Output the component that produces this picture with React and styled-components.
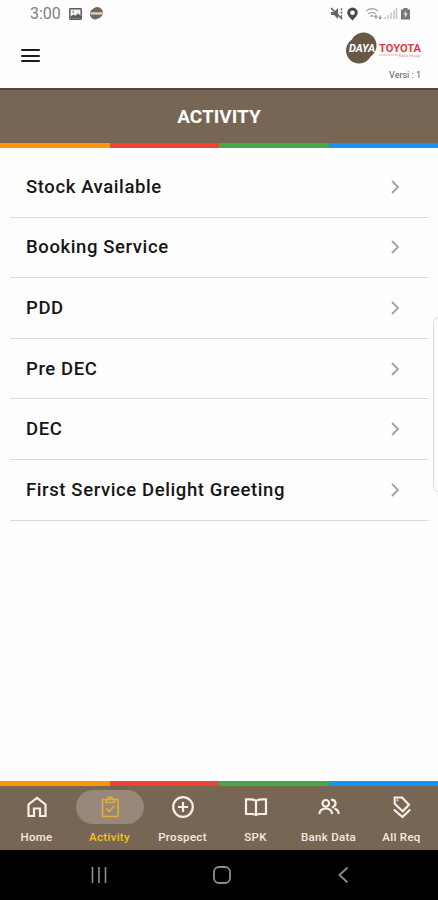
import styled, { createGlobalStyle } from 'styled-components';

export default function App() {
  return (
    <Screen>
      <GlobalStyle />
      <StatusBar />
      <Header />
      <TitleBar>ACTIVITY</TitleBar>
      <ColorStrip />
      <Menu>
        {MENU_ITEMS.map((label) => (
          <MenuItem key={label}>
            <span>{label}</span>
            <Chevron />
          </MenuItem>
        ))}
      </Menu>
      <ColorStrip />
      <TabBar>
        {TABS.map(({ label, Icon }) => (
          <Tab key={label} $active={label === 'Activity'}>
            <TabPill $active={label === 'Activity'}>
              <Icon />
            </TabPill>
            <TabLabel>{label}</TabLabel>
          </Tab>
        ))}
      </TabBar>
      <SystemNav />
      <EdgeHandle />
    </Screen>
  );
}

function StatusBar() {
  return (
    <StatusRow>
      <Clock>3:00</Clock>
      <svg width="13" height="12" viewBox="0 0 13 12">
        <rect x="0.8" y="0.8" width="11.4" height="10.4" rx="0.6" fill="#f2f2f2" stroke="#5c5c5c" strokeWidth="1.5" />
        <path d="M1.5 10.5V8.5l3-2 2 1.2L9 5.5l3 2.5v2.5z" fill="#5c5c5c" />
        <circle cx="4.2" cy="3.9" r="0.8" fill="#777" />
      </svg>
      <Notification width="15" height="15" viewBox="0 0 15 15">
        <circle cx="8.2" cy="6.8" r="5.7" fill="#75665a" />
        <circle cx="6.2" cy="8" r="5.4" fill="#75665a" />
        <path d="M1.5 7.4h12" stroke="#d8d0c8" strokeWidth="2.4" />
      </Notification>
      <StatusIcons width="82" height="16" viewBox="0 0 82 16">
        <path d="M1 6h3l4-4v11L4 9H1z" fill="#666" />
        <path d="M1 2l11 11" stroke="#666" strokeWidth="1.7" fill="none" />
        <path d="M11.5 2v11" stroke="#777" strokeWidth="1.4" strokeDasharray="2.5 1" />
        <path
          fillRule="evenodd"
          d="M22.5 1.5a5.3 5.3 0 0 0-5.3 5.3c0 3.2 5.3 7.7 5.3 7.7s5.300-4.500 5.300-7.700a5.300 5.300 0 0 0-5.300-5.300zm0 3a2.300 2.300 0 1 1 0 4.600 2.300 2.300 0 0 1 0-4.600z"
          fill="#4b4b4b"
        />
        <path d="M36 5q6-4.500 12 0M38 8q4-3 8 0M40 10.500q2-1.500 4 0" stroke="#aaa" strokeWidth="1.4" fill="none" />
        <path d="M46 13V9.5M44.7 11l1.3-1.5 1.3 1.5M50 9.500V13M48.700 11.500L50 13l1.300-1.500" stroke="#777" strokeWidth="1" fill="none" />
        <path d="M55 13v-2M58 13V9M61 13V6.5M64 13V4M66.5 13V2" stroke="#c8c8c8" strokeWidth="1.6" />
        <path d="M73.5 2h4v1.5H80v10h-9v-10h2.5z" fill="#777" />
        <path d="M76 4.5l-2.5 4H75v3l3-4h-2z" fill="#ddd" />
      </StatusIcons>
    </StatusRow>
  );
}

function Header() {
  return (
    <HeaderRow>
      <Burger>
        <i />
        <i />
        <i />
      </Burger>
      <Brand>
        <Logo width="77" height="34" viewBox="0 0 77 34">
          <circle cx="18.500" cy="14.500" r="13" fill="#685947" />
          <circle cx="14" cy="19.500" r="13" fill="#685947" />
          <text x="4" y="20.500" textLength="26" lengthAdjust="spacingAndGlyphs" fill="#fff" fontSize="11" fontWeight="700" fontStyle="italic">
            DAYA
          </text>
          <text x="34" y="20.800" textLength="42" lengthAdjust="spacingAndGlyphs" fill="#e03a40" fontSize="11.500" fontWeight="700">
            TOYOTA
          </text>
          <path d="M34 24h19" stroke="#e3aaa9" strokeWidth="0.9" />
          <text x="54" y="25.500" textLength="21" fill="#c77" fontSize="3.600">
            Kalla Group
          </text>
        </Logo>
        <Version>Versi : 1</Version>
      </Brand>
    </HeaderRow>
  );
}

function Chevron() {
  return (
    <svg width="10" height="16" viewBox="0 0 10 16">
      <path d="M2 2l6 6-6 6" fill="none" stroke="#a2a2a2" strokeWidth="1.8" />
    </svg>
  );
}

function SystemNav() {
  return (
    <NavRow>
      <svg width="18" height="18" viewBox="0 0 18 18">
        <path d="M2.500 1v16M9 1v16M15.500 1v16" stroke="#8c8c8c" strokeWidth="1.600" />
      </svg>
      <svg width="20" height="20" viewBox="0 0 20 20">
        <rect x="2" y="2" width="16" height="16" rx="5" fill="none" stroke="#8c8c8c" strokeWidth="1.8" />
      </svg>
      <svg width="14" height="18" viewBox="0 0 14 18">
        <path d="M11.500 1.500L3.500 9l8 7.500" fill="none" stroke="#8c8c8c" strokeWidth="1.8" />
      </svg>
    </NavRow>
  );
}

const HomeIcon = () => (
  <TabSvg viewBox="0 0 24 24">
    <path d="M3.500 21V9.500L12 3l8.500 6.500V21H15v-7.500H9V21z" />
  </TabSvg>
);

const ClipboardIcon = () => (
  <TabSvg viewBox="0 0 24 24">
    <path d="M4.500 4.500h15.500v17H4.500zM8 4.500v3h8.500v-3M9.800 4.500a2.400 2.400 0 0 1 4.800 0M8 13.500l3 3 5.500-5.500" strokeWidth="1.700" />
  </TabSvg>
);

const PlusIcon = () => (
  <TabSvg viewBox="0 0 24 24">
    <circle cx="12" cy="12" r="9.800" />
    <path d="M12 7v10M7 12h10" />
  </TabSvg>
);

const BookIcon = () => (
  <TabSvg viewBox="0 0 24 24">
    <path d="M12 6C10 4.300 8 4.300 6 4.300H2V19h5.500c2 0 3.500 0 4.500 1 1-1 2.500-1 4.500-1H22V4.300h-4c-2 0-4 0-6 1.700zV20" />
  </TabSvg>
);

const PeopleIcon = () => (
  <TabSvg viewBox="0 0 24 24">
    <circle cx="8.800" cy="8.300" r="3.300" />
    <path d="M2.300 19c.5-3.500 2.700-5.500 6.500-5.500s6 2 6.500 5.500M14 5c5-.7 6 5 2.300 6.800l-1 1.200M17.500 13.500c2.500.8 4 2.500 4.200 5.500" />
  </TabSvg>
);

const TagsIcon = () => (
  <TabSvg viewBox="0 0 24 24">
    <path d="M4.700 2.500h7.300l7 7.300-6.300 6.400-8-7.400zM3.800 14.500L12.500 22l7.700-7.500" />
    <circle cx="7.500" cy="5.200" r="0.700" strokeWidth="1" />
  </TabSvg>
);

const MENU_ITEMS = [
  'Stock Available',
  'Booking Service',
  'PDD',
  'Pre DEC',
  'DEC',
  'First Service Delight Greeting',
];

const TABS = [
  { label: 'Home', Icon: HomeIcon },
  { label: 'Activity', Icon: ClipboardIcon },
  { label: 'Prospect', Icon: PlusIcon },
  { label: 'SPK', Icon: BookIcon },
  { label: 'Bank Data', Icon: PeopleIcon },
  { label: 'All Req', Icon: TagsIcon },
];

const GlobalStyle = createGlobalStyle`
  body {
    margin: 0;
    background: #fff;
    font-family: Roboto, sans-serif;
  }
  * {
    box-sizing: border-box;
  }
`;
const Screen = styled.div`
  position: relative;
  display: flex;
  flex-direction: column;
  width: 438px;
  height: 900px;
  overflow: hidden;
  background: #fefefe;
`;
const StatusRow = styled.div`
  display: flex;
  align-items: center;
  height: 27px;
  padding: 0 26px 0 30px;
  flex: none;
`;
const Clock = styled.span`
  width: 39px;
  font-size: 16px;
  line-height: 27px;
  color: #808080;
`;
const Notification = styled.svg`
  margin-left: 7px;
`;
const StatusIcons = styled.svg`
  margin-left: auto;
`;
const HeaderRow = styled.div`
  display: flex;
  justify-content: space-between;
  height: 61px;
  flex: none;
  padding: 4px 16px 0 21px;
`;
const Burger = styled.div`
  display: flex;
  flex-direction: column;
  gap: 3.5px;
  padding-top: 18px;
  i {
    width: 19px;
    height: 2px;
    border-radius: 1px;
    background: #1c1c1c;
  }
`;
const Brand = styled.div`
  display: flex;
  flex-direction: column;
  align-items: flex-end;
`;
const Logo = styled.svg`
  flex: none;
`;
const Version = styled.span`
  margin: 4px 1px 0 0;
  font-size: 9px;
  line-height: 12px;
  color: #555;
`;
const TitleBar = styled.h1`
  display: flex;
  align-items: center;
  justify-content: center;
  height: 55px;
  flex: none;
  margin: 0;
  border-top: 2px solid #51483d;
  background: #786654;
  color: #fff;
  font-size: 19px;
  font-weight: 700;
`;
const ColorStrip = styled.div`
  height: 5px;
  flex: none;
  background: linear-gradient(
    to right,
    #fa960c 25%,
    #ee4232 25% 50%,
    #43aa45 50% 75%,
    #1c90ed 75%
  );
`;
const Menu = styled.ul`
  flex: 1;
  margin: 0;
  padding: 9px 9px 0 10px;
  list-style: none;
`;
const MenuItem = styled.li`
  display: flex;
  align-items: center;
  justify-content: space-between;
  height: 60.6px;
  padding: 0 29px 0 16px;
  border-bottom: 1.5px solid #dcdcdc;
  color: #161616;
  font-size: 18.5px;
  font-weight: 500;
  letter-spacing: 0.6px;
`;
const TabBar = styled.nav`
  display: grid;
  grid-template-columns: repeat(6, 1fr);
  height: 64px;
  flex: none;
  background: #786654;
`;
const Tab = styled.div`
  display: flex;
  flex-direction: column;
  align-items: center;
  padding-top: 4px;
  color: ${(props) => (props.$active ? '#f5c21b' : '#f3ebe2')};
`;
const TabPill = styled.div`
  display: flex;
  align-items: center;
  justify-content: center;
  width: 68px;
  height: 34px;
  border-radius: 17px;
  background: ${(props) => (props.$active ? '#978879' : 'transparent')};
  color: ${(props) => (props.$active ? '#e0ae35' : '#f7f0e8')};
`;
const TabSvg = styled.svg`
  width: 24px;
  height: 24px;
  fill: none;
  stroke: currentColor;
  stroke-width: 2.2;
`;
const TabLabel = styled.span`
  margin-top: 6px;
  font-size: 11.5px;
  font-weight: 500;
  line-height: 14px;
  letter-spacing: 0.3px;
  white-space: nowrap;
`;
const NavRow = styled.div`
  display: flex;
  align-items: center;
  justify-content: space-between;
  height: 50px;
  flex: none;
  padding: 0 88px 0 90px;
  background: #000;
`;
/* pull-out edge panel handle, floats over the list */
const EdgeHandle = styled.div`
  position: absolute;
  top: 317px;
  right: -6px;
  width: 11px;
  height: 175px;
  border: 1.5px solid #d9d9d9;
  border-radius: 6px;
  background: #fefefe;
`;
